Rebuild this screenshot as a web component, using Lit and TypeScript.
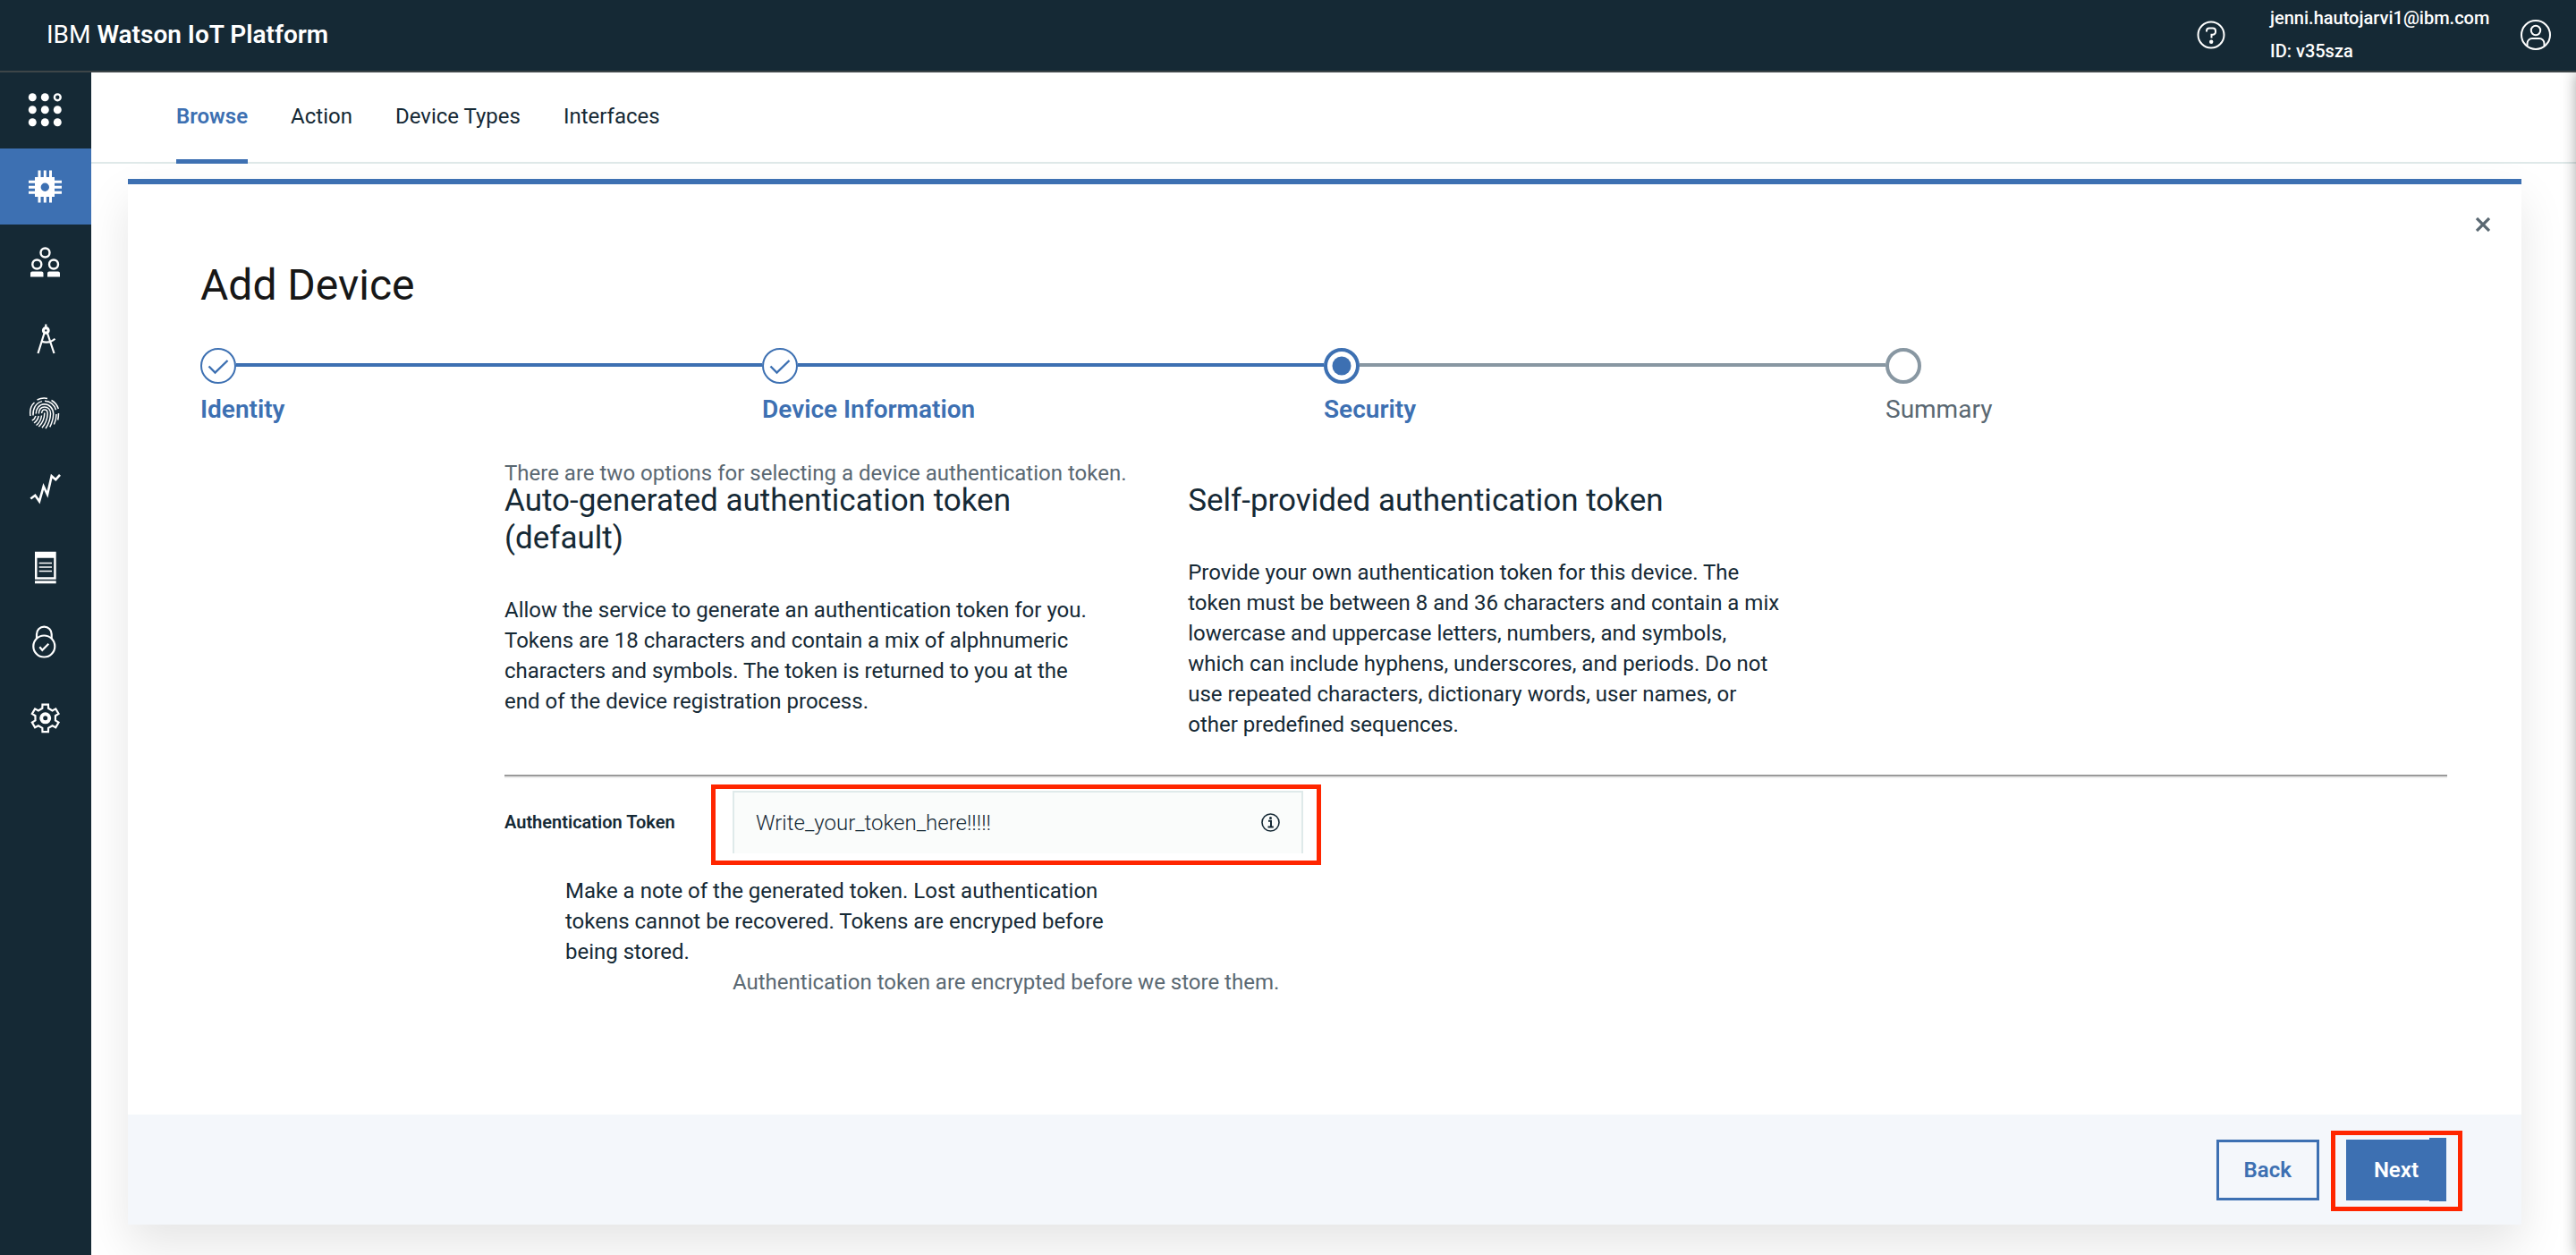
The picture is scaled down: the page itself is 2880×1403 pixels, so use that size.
import { LitElement, html, css, svg, nothing } from "lit";
import { customElement } from "lit/decorators.js";
import { classMap } from "lit/directives/class-map.js";

const gearPath = (cx: number, cy: number, outer: number, inner: number) => {
  const points: string[] = [];
  for (let i = 0; i < 6; i++) {
    const a = -90 + i * 60;
    for (const [r, d] of [[inner, -17], [outer, -12], [outer, 12], [inner, 17]]) {
      const t = ((a + d) * Math.PI) / 180;
      points.push(`${(cx + r * Math.cos(t)).toFixed(2)} ${(cy + r * Math.sin(t)).toFixed(2)}`);
    }
  }
  return `M${points.join("L")}Z`;
};

const icons = {
  apps: svg`
    <g fill="currentColor">
      <circle cx="5.3" cy="4.8" r="4.5"/><circle cx="19.3" cy="4.8" r="4.5"/>
      <circle cx="5.3" cy="18.8" r="4.5"/><circle cx="19.3" cy="18.8" r="4.5"/><circle cx="33.3" cy="18.8" r="4.5"/>
      <circle cx="5.3" cy="32.8" r="4.5"/><circle cx="19.3" cy="32.8" r="4.5"/><circle cx="33.3" cy="32.8" r="4.5"/>
    </g>
    <circle cx="33.3" cy="4.8" r="3.4" fill="none" stroke="currentColor" stroke-width="2.4"/>`,
  chip: svg`
    <path d="M13 1.5V10M19.3 1.5V10M25.5 1.5V10M13 30v7.5M19.3 30v7.5M25.5 30v7.5M1 14.2h8M1 20.2h8M1 26.2h8M29 14.2h9M29 20.2h9M29 26.2h9" stroke="currentColor" stroke-width="3" fill="none"/>
    <path fill-rule="evenodd" fill="currentColor" d="M8 9h22v22H8zM19.3 15.5a4.7 4.7 0 1 0 0 9.4a4.7 4.7 0 1 0 0-9.4z"/>`,
  people: svg`
    <g fill="none" stroke="currentColor" stroke-width="2.4">
      <circle cx="19.5" cy="8.5" r="5"/><circle cx="10.3" cy="21.5" r="5"/><circle cx="29" cy="21.5" r="5"/>
    </g>
    <path fill="currentColor" d="M3 35.5v-4a2 2 0 0 1 2-2h10.5a2 2 0 0 1 2 2v4zM22 35.5v-4a2 2 0 0 1 2-2h10a2 2 0 0 1 2 2v4z"/>`,
  compass: svg`
    <path d="M20.3 3.5V8M18.5 13.5L11.5 36M22 13.5L29.500 36M15 22.5c5 1.8 11 1.4 15.5-2.7" fill="none" stroke="currentColor" stroke-width="2.2"/>
    <path fill-rule="evenodd" fill="currentColor" d="M20.3 6a4.4 4.4 0 1 0 0 8.8a4.4 4.4 0 1 0 0-8.8zM20.3 9.2a1.200 1.2 0 1 1 0 2.4a1.2 1.2 0 1 1 0-2.4z"/>`,
  fingerprint: svg`
    <g fill="none" stroke="currentColor" stroke-width="1.5">
      <path d="M10.5 3C15 .8 19 .6 22 1.5M26.5 3.5c4 2.2 6.500 5.500 7.800 9.500M3 21C2 14.5 3.500 9.500 7.500 6"/>
      <path d="M6 20.5C5.5 13 9 6.5 16 4.600M19 4.300c6 0 11 4 12.500 10"/>
      <path d="M9.200 18.500C9.400 12.500 13 8 18.500 7.800c5.500 0 10 4.500 10.200 11-.2 5-1.500 10-4 14.500"/>
      <path d="M12.400 18.500c.2-4.500 2.500-7.500 6.300-7.500 4 0 6.700 3 6.800 7.500-.2 6-2 11.500-5.500 16.500"/>
      <path d="M15.600 18c.2-2.500 1-4 3.100-4s3.500 1.800 3.500 4.500c-.3 6-2.500 11.500-6.200 15.800"/>
      <path d="M18.800 17.500c0 6-2.200 11.500-6.500 15.500M15.500 20.500c-.6 5-2.700 8.500-6 11M12.200 21c-.8 3.800-2.500 6.200-5.200 8M9 21c-.8 2.400-2 4-4.200 5.200"/>
      <path d="M32 19c0 4-.9 8-2.600 11.500M34.500 18c0 3-.3 5-.8 7.500"/>
    </g>`,
  chart: svg`
    <path d="M3.300 28.500L8.300 24.800L13 31.500L17.700 14.800L22 23.800L26.700 3.200L31.300 7.200L36 1.800" fill="none" stroke="currentColor" stroke-width="2.600"/>`,
  document: svg`
    <path fill-rule="evenodd" fill="currentColor" d="M8 2.800h23.700v31H8zM10.500 9.700h18.700v21.500H10.500z"/>
    <path d="M12.700 15.500H27M12.700 20H27M12.700 24.500H27" stroke="currentColor" stroke-width="1.600"/>
    <path d="M8 36.800h23.700" stroke="currentColor" stroke-width="3"/>`,
  lock: svg`
    <g fill="none" stroke="currentColor" stroke-width="2.200">
      <circle cx="18.300" cy="23.500" r="12"/>
      <path d="M10 15V10a8.300 8.300 0 0 1 16.700 0v5"/>
      <path d="M13.300 24.200L16.300 27.800L23.300 20.800"/>
    </g>`,
  gear: svg`
    <path d=${gearPath(19.7, 18.8, 15.6, 11.5)} fill="none" stroke="currentColor" stroke-width="2.200"/>
    <circle cx="19.700" cy="18.800" r="4.500" fill="none" stroke="currentColor" stroke-width="4"/>`,
};

const navItems: { label: string; icon: keyof typeof icons }[] = [
  { label: "Boards", icon: "apps" },
  { label: "Devices", icon: "chip" },
  { label: "Members", icon: "people" },
  { label: "Apps", icon: "compass" },
  { label: "Access Management", icon: "fingerprint" },
  { label: "Usage", icon: "chart" },
  { label: "Rules", icon: "document" },
  { label: "Security", icon: "lock" },
  { label: "Settings", icon: "gear" },
];

const tabs = ["Browse", "Action", "Device Types", "Interfaces"];

type StepState = "done" | "current" | "todo";
const steps: { label: string; state: StepState }[] = [
  { label: "Identity", state: "done" },
  { label: "Device Information", state: "done" },
  { label: "Security", state: "current" },
  { label: "Summary", state: "todo" },
];

const stepMark = (state: StepState) => {
  if (state === "done") {
    return svg`<circle cx="20" cy="20" r="19" stroke-width="2"/><path d="M9.500 20.500L16.500 27.500L30.500 14" stroke-width="2.400"/>`;
  }
  if (state === "current") {
    return svg`<circle cx="20" cy="20" r="18" stroke-width="4"/><circle cx="20" cy="20" r="10.500" fill="currentColor" stroke="none"/>`;
  }
  return svg`<circle cx="20" cy="20" r="18" stroke-width="4"/>`;
};

@customElement("app-root")
export class AppRoot extends LitElement {
  static styles = css`
    :host {
      display: flex;
      flex-direction: column;
      min-height: 100vh;
      font-family: Roboto, "Liberation Sans", sans-serif;
      font-size: 24px;
      line-height: 34px;
      color: #152935;
      background: #fff;
    }
    * { box-sizing: border-box; }
    h1, h2, p, ul, ol, hr { margin: 0; padding: 0; font-weight: 400; }
    ul, ol { list-style: none; }
    svg { display: block; }
    button { font: inherit; cursor: pointer; border: 0; padding: 0; background: none; color: inherit; }
    a { color: inherit; text-decoration: none; }

    .header {
      display: flex;
      align-items: center;
      height: 81px;
      padding: 0 28px 2px 52px;
      border-bottom: 2px solid #3d4548;
      background: #152935;
      color: #fff;
    }
    .brand { flex: 1; font-size: 28px; }
    .brand b { font-weight: 600; }
    .account { width: 248px; margin: 0 32px 0 50px; font-size: 20px; line-height: 37px; font-weight: 500; white-space: nowrap; }

    .shell { display: flex; flex: 1; }
    .sidebar { width: 102px; background: #152935; color: #fff; }
    .nav-link { display: flex; align-items: center; justify-content: center; height: 85px; }
    .nav-link.active { background: #3d70b2; }

    .main { flex: 1; min-width: 0; position: relative; overflow: hidden; }
    .main::after {
      content: "";
      position: absolute;
      inset: 0 auto 0 100%;
      width: 20px;
      box-shadow: 0 0 16px rgba(0, 0, 0, 0.35);
    }
    .tabs { display: flex; gap: 48px; padding: 0 95px; border-bottom: 2px solid #dfe9e9; }
    .tab { height: 102px; padding-top: 32px; margin-bottom: -2px; }
    .tab.active { color: #3d70b2; font-weight: 600; border-bottom: 5px solid #3d70b2; }

    .panel {
      margin: 17px 61px 34px 41px;
      border-top: 6px solid #3d70b2;
      background: #fff;
      box-shadow: 0 24px 48px rgba(0, 0, 0, 0.1);
    }
    .content { display: flex; flex-direction: column; padding: 37px 83px 131px 81px; }
    .close { align-self: flex-end; margin-right: -48px; color: #5a6872; }
    .title { margin-top: 30px; font-size: 48px; line-height: 60px; color: #171717; }

    .steps { display: flex; margin-top: 40px; }
    .step { flex: 1; color: #3d70b2; font-size: 28px; font-weight: 600; }
    .step.todo { color: #5a6872; font-weight: 400; }
    .track { display: flex; }
    .track::after { content: ""; flex: 1; height: 4px; margin-top: 17px; background: #3d70b2; }
    .step.current .track::after { background: #8897a2; }
    .step:last-child .track::after { display: none; }
    .step.todo .mark { color: #8897a2; }
    .step-label { display: block; margin-top: 12px; }

    .section { margin: 44px 0 0 340px; }
    .intro { line-height: 20px; color: #5a6872; }
    .options { display: grid; grid-template-columns: 19fr 35fr; }
    .option { max-width: 667px; }
    .option h2 { margin-bottom: 42px; font-size: 35px; line-height: 42px; }
    .rule { margin: 39px 0 14px; height: 4px; border: 0; border-top: 2px solid #9a9a9a; background: #eee; }

    .field { display: flex; align-items: center; }
    .field-label { width: 255px; font-size: 20px; font-weight: 600; }
    .field-box { position: relative; width: 638px; }
    .input {
      display: block;
      width: 100%;
      height: 70px;
      padding: 0 64px 0 24px;
      border: 2px solid #dfeaea;
      border-bottom: 0;
      border-radius: 0;
      outline: 0;
      background: #fafcfb;
      font: inherit;
      font-weight: 300;
      color: #152935;
    }
    .info { position: absolute; top: 25px; right: 26px; }
    .note { max-width: 640px; margin: 25px 0 0 68px; }
    .helper { margin-left: 255px; color: #5a6872; }

    .highlight { position: absolute; border: 5px solid #ff2600; pointer-events: none; }
    .field-box .highlight { inset: -7px -20px -13px -24px; }
    .next-box .highlight { inset: -10px -18px -12px -17px; }

    .footer {
      display: flex;
      justify-content: flex-end;
      align-items: center;
      gap: 30px;
      height: 123px;
      padding: 0 84px 0 24px;
      background: #f4f7fb;
    }
    .next-box { position: relative; }
    .button { display: block; height: 68px; min-width: 112px; padding: 0 28px; border: 3px solid #3d70b2; color: #3d70b2; font-weight: 600; }
    .button.primary { background: #3d70b2; color: #fff; }
    .next-box::after { content: ""; position: absolute; inset: -2px 0 -1px auto; width: 19px; background: #3d70b2; }
  `;

  render() {
    return html`
      <header class="header">
        <div class="brand">IBM <b>Watson IoT Platform</b></div>
        <button aria-label="Help">
          <svg width="32" height="32" viewBox="0 0 32 32" fill="none" stroke="currentColor" stroke-width="2">
            <circle cx="16" cy="16" r="14.500"/>
            <path d="M11 12.500V11.500a3 3 0 0 1 3-3h4a3 3 0 0 1 3 3v1.200a3 3 0 0 1-3 3h-1.500v3.800"/>
            <circle cx="16.200" cy="23.800" r="2.200" fill="currentColor" stroke="none"/>
          </svg>
        </button>
        <div class="account">
          <div>jenni.hautojarvi1@ibm.com</div>
          <div>ID: v35sza</div>
        </div>
        <button aria-label="Account">
          <svg width="34" height="34" viewBox="0 0 34 34" fill="none" stroke="currentColor" stroke-width="2">
            <circle cx="17" cy="17" r="16"/>
            <circle cx="17" cy="12" r="5.200"/>
            <path d="M7.500 29.500V26.500a5.500 5.500 0 0 1 5.500-5.500h8a5.500 5.500 0 0 1 5.500 5.500v3"/>
          </svg>
        </button>
      </header>
      <div class="shell">
        <nav class="sidebar" aria-label="Main">
          <ul>
            ${navItems.map(
              (item) => html`<li>
                <a href="#" class=${classMap({ "nav-link": true, active: item.icon === "chip" })} aria-label=${item.label}>
                  <svg width="40" height="40" viewBox="0 0 40 40">${icons[item.icon]}</svg>
                </a>
              </li>`
            )}
          </ul>
        </nav>
        <main class="main">
          <nav class="tabs" aria-label="Devices">
            ${tabs.map(
              (tab, i) => html`<a href="#" class=${classMap({ tab: true, active: i === 0 })} aria-current=${i === 0 ? "page" : nothing}>${tab}</a>`
            )}
          </nav>
          <section class="panel">
            <div class="content">
              <button class="close" aria-label="Close">
                <svg width="16" height="16" viewBox="0 0 16 16" fill="none" stroke="currentColor" stroke-width="3.200"><path d="M1 1L15 15M15 1L1 15"/></svg>
              </button>
              <h1 class="title">Add Device</h1>
              <ol class="steps">
                ${steps.map(
                  (step) => html`<li class=${classMap({ step: true, [step.state]: true })}>
                    <div class="track">
                      <svg class="mark" width="40" height="40" viewBox="0 0 40 40" fill="none" stroke="currentColor">${stepMark(step.state)}</svg>
                    </div>
                    <span class="step-label">${step.label}</span>
                  </li>`
                )}
              </ol>
              <div class="section">
                <p class="intro">There are two options for selecting a device authentication token.</p>
                <div class="options">
                  <div class="option">
                    <h2>Auto-generated authentication token (default)</h2>
                    <p>Allow the service to generate an authentication token for you. Tokens are 18 characters and contain a mix of alphnumeric characters and symbols. The token is returned to you at the end of the device registration process.</p>
                  </div>
                  <div class="option">
                    <h2>Self-provided authentication token</h2>
                    <p>Provide your own authentication token for this device. The token must be between 8 and 36 characters and contain a mix lowercase and uppercase letters, numbers, and symbols, which can include hyphens, underscores, and periods. Do not use repeated characters, dictionary words, user names, or other predefined sequences.</p>
                  </div>
                </div>
                <hr class="rule" />
                <div class="field">
                  <label class="field-label" for="token">Authentication Token</label>
                  <div class="field-box">
                    <input class="input" id="token" type="text" value="Write_your_token_here!!!!!" />
                    <button class="info" aria-label="Token information">
                      <svg width="21" height="21" viewBox="0 0 21 21" fill="none" stroke="currentColor">
                        <circle cx="10.500" cy="10.500" r="9.500" stroke-width="1.600"/>
                        <path d="M8 8.800h3v6.500M7.500 15.400h6.300" stroke-width="2"/>
                        <circle cx="10.500" cy="5.600" r="1.500" fill="currentColor" stroke="none"/>
                      </svg>
                    </button>
                    <span class="highlight"></span>
                  </div>
                </div>
                <p class="note">Make a note of the generated token. Lost authentication tokens cannot be recovered. Tokens are encryped before being stored.</p>
                <p class="helper">Authentication token are encrypted before we store them.</p>
              </div>
            </div>
            <footer class="footer">
              <button class="button">Back</button>
              <div class="next-box">
                <button class="button primary">Next</button>
                <span class="highlight"></span>
              </div>
            </footer>
          </section>
        </main>
      </div>
    `;
  }
}
